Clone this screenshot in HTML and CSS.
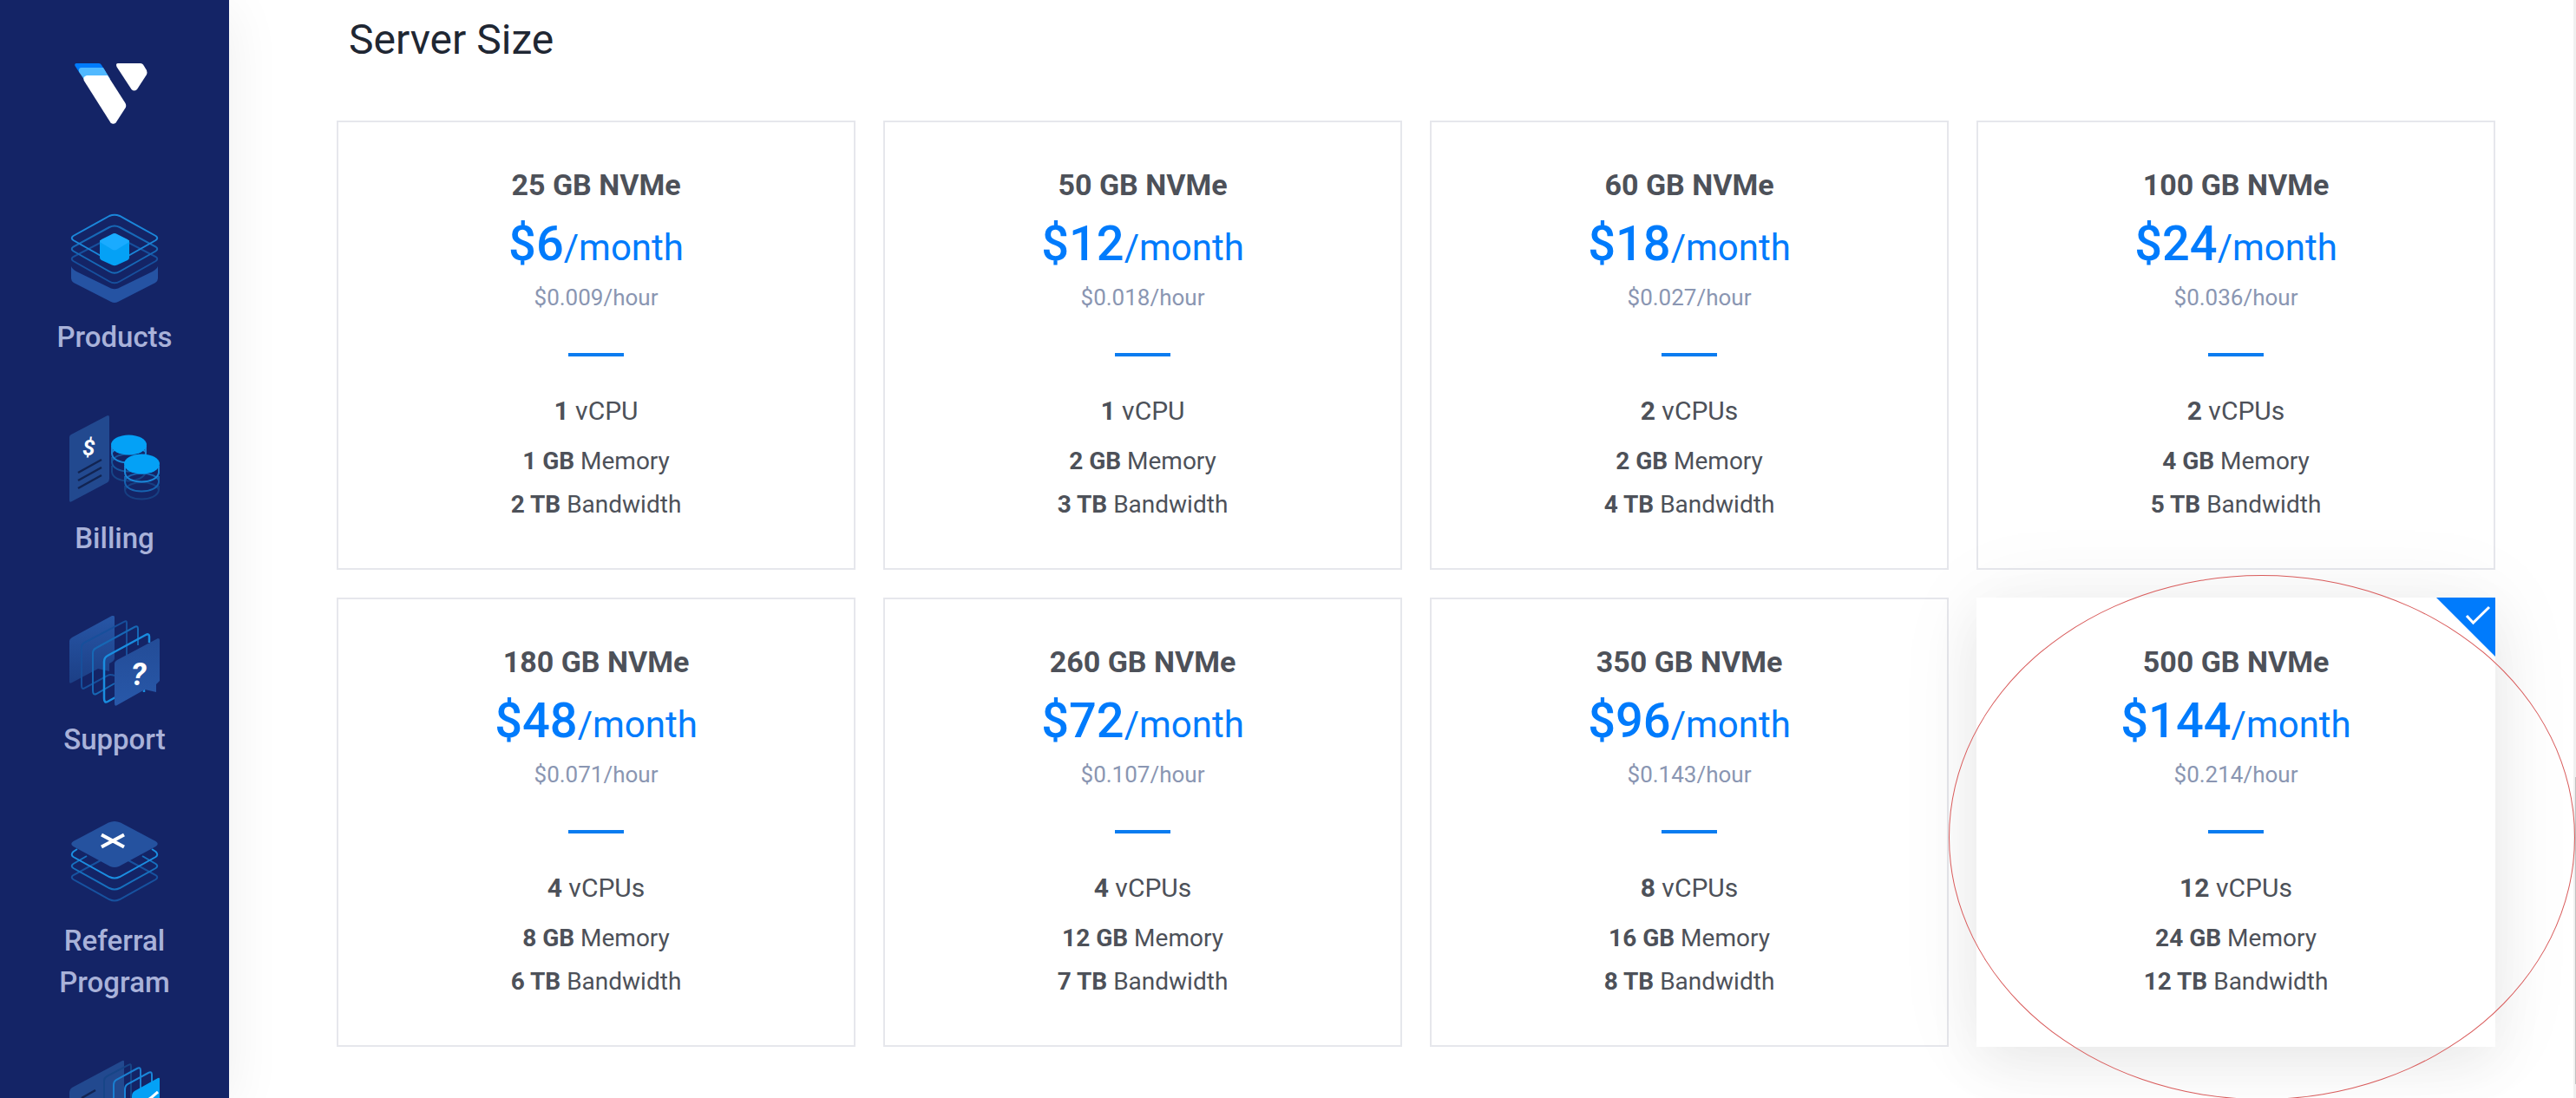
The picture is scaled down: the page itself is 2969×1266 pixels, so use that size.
FILE: index.html
```html
<!DOCTYPE html>
<html lang="en">
<head>
<meta charset="utf-8">
<title>Server Size</title>
<link rel="stylesheet" href="styles.css">
</head>
<body>
<div class="app">
  <nav class="sidebar" aria-label="Main">
    <a class="logo" href="#" aria-label="Home">
      <svg width="84" height="70" viewBox="0 0 84 70">
        <path fill="#007bfc" d="M2 0H28Q30 0 31 2L36 10H5L.500 3Q-.500 0 2 0Z"/>
        <path fill="#51b9ff" d="M8 5H33L41 18H10.500L5 10Q4 5 8 5Z"/>
        <path fill="#fff" d="M14 14H38L58.500 46Q60 49 58.500 51.500L47.500 68.500Q44.500 71 41.500 68.500L10.800 20Q9 15.500 14 14Z"/>
        <path fill="#fff" d="M50 0H76Q78 0 79 1.500L83 8Q84 11 83 13L72 30Q68.500 33 65.500 30L48.500 4Q47 0 50 0Z"/>
      </svg>
    </a>
    <ul class="nav-list">
      <li><a class="nav-item" href="#">
        <svg class="nav-icon" viewBox="0 0 104 104">
          <g fill="none" stroke-width="2">
            <path stroke="#17509d" d="M46 28.500 4.500 50Q1 52.500 4.500 55L46 78.500Q52 82 58 78.500L99.500 55Q103 52.500 99.500 50L58 28.500Q52 25.500 46 28.500Z"/>
            <path stroke="#1769b7" d="M46 16 4.500 38.500Q1 41 4.500 43.500L46 67Q52 70.500 58 67L99.500 43.500Q103 41 99.500 38.500L58 16Q52 13 46 16Z"/>
            <path stroke="#1b87da" d="M46 3 4.500 26Q1 28.500 4.500 31L46 54.500Q52 58 58 54.500L99.500 31Q103 28.500 99.500 26L58 3Q52 .5 46 3Z"/>
          </g>
          <path fill="#2553a3" d="M2 61Q3 64 8 67L48 86.500Q52 88 56 86.500L96 67Q101 64 102 61V75Q102 78 99 80L56 102Q52 104 48 102L5 80Q2 78 2 75Z"/>
          <path fill="#04a1f6" d="M35 31H69V51Q69 53 67 54L55 59.500Q52 61 49 59.500L37 54Q35 53 35 51Z"/>
          <path fill="#1aabff" d="M49 24Q52 22 55 24L67 30Q69 31 69 33L55 41.500Q52 43.500 49 41.500L35 33Q35 31 37 30Z"/>
        </svg>
        <span>Products</span></a></li>
      <li><a class="nav-item" href="#">
        <svg class="nav-icon" viewBox="0 0 104 104">
          <path fill="#22498f" d="M0 26Q0 24 2 23L43 1.500Q46 0 46 3V74Q46 77 43.500 78.500L3 100Q0 102 0 99Z"/>
          <path stroke="#122452" stroke-width="2.500" d="M10 67 37 52M10 76 37 61M10 85 37 70"/>
          <text class="glyph" x="15" y="47">$</text>
          <g fill="none" stroke-width="2">
            <path stroke="#174588" d="M49 59V66C50 80 85 80 88 66V60"/>
            <path stroke="#17559d" d="M49 49V55C50 69 85 69 88 55V49M50 53C53 43 82 43 87 53"/>
            <path stroke="#1a86d8" d="M49 36V45C50 59 85 59 88 45V36M50 43C55 33 82 33 87 43"/>
          </g>
          <ellipse cx="68.500" cy="35" rx="20.500" ry="11.500" fill="#04a1f6"/>
          <g fill="none" stroke-width="2">
            <path stroke="#173f82" d="M64 82V87C65 101 101 101 103 87V82M64 87C68 75 99 75 103 87"/>
            <path stroke="#1763b0" d="M64 71V78C65 92 101 92 103 78V71M64 76C68 65 99 65 103 76"/>
            <path stroke="#1a86d8" d="M64 59V67C65 81 101 81 103 67V59"/>
          </g>
          <ellipse cx="83.500" cy="57" rx="20.500" ry="11.500" fill="#04a1f6"/>
        </svg>
        <span>Billing</span></a></li>
      <li><a class="nav-item" href="#">
        <svg class="nav-icon" viewBox="0 0 104 104">
          <defs>
            <linearGradient id="panel" x2="0" y2="1"><stop stop-color="#2756a6"/><stop offset="1" stop-color="#1c3f86"/></linearGradient>
            <linearGradient id="front" x2="0" y2="1"><stop stop-color="#234c97"/><stop offset="1" stop-color="#2858a9"/></linearGradient>
          </defs>
          <path fill="url(#panel)" d="M0 29Q0 27 3 25L49 0Q52-1 52 2V49Q52 52 46 55V64L33 61 3 77Q0 79 0 76Z"/>
          <g fill="none" stroke-width="2">
            <path stroke="#174f9b" d="M66 46V8Q66 5 63 7L17 31Q14 33 14 36V80Q14 86 18 83L44 69Q47 67 52 69"/>
            <path stroke="#1768b5" d="M79 34V15Q79 11 75 13L31 37Q27 39 27 43V86Q27 92 31 90L52 78"/>
            <path stroke="#1a8ddf" stroke-width="2.500" d="M92 31V24Q92 20 88 22L44 46Q40 48 40 53V95Q40 101 44 99L53 94M86 83V88"/>
          </g>
          <path fill="url(#front)" d="M52 55Q52 53 55 51L102 26Q104 26 104 28V75L100 79V88L87 85 55 103Q52 105 52 101Z"/>
          <text class="glyph glyph-large" x="71" y="80">?</text>
        </svg>
        <span>Support</span></a></li>
      <li><a class="nav-item" href="#">
        <svg class="nav-icon" viewBox="0 0 104 104">
          <g fill="none" stroke-width="2">
            <path stroke="#17529f" d="M36 50 4.500 67Q1 69.500 4.500 72L46 95Q52 98 58 95L99.500 72Q103 69.500 99.500 67L68 50"/>
            <path stroke="#1770be" d="M20 45 4.500 54Q1 56.500 4.500 59L46 82Q52 85 58 82L99.500 59Q103 56.500 99.500 54L84 45"/>
            <path stroke="#1b8ee1" d="M9 37 4.500 40Q1 43.500 4.500 46L46 69Q52 72 58 69L99.500 46Q103 43.500 99.500 40L95 37"/>
          </g>
          <path fill="#25529f" d="M45 6.500Q52 3.500 59 6.500L99.500 28Q104 31 99.500 34L57 57Q52 59 47 57L4.500 34Q0 31 4.500 28Z"/>
          <path stroke="#fff" stroke-width="4" d="M37 20.500 63 34.500M63 20.500 37 34.500"/>
        </svg>
        <span>Referral Program</span></a></li>
      <li><a class="nav-item" href="#" aria-label="Documents">
        <svg class="nav-icon" viewBox="0 0 104 104">
          <path fill="#22498f" d="M0 37Q0 34 3 32L61 1Q63 0 63 2V80L0 104Z"/>
          <path stroke="#122452" stroke-width="2.500" d="M14 44 30 35"/>
          <g fill="none" stroke-width="2">
            <path stroke="#174587" d="M71 60V7Q71 4 68 6L43 19Q40 21 40 24V90"/>
            <path stroke="#1a7fd0" d="M82 60V12Q82 8 78 10L54 23Q51 25 51 29V90"/>
            <path stroke="#1a86d8" d="M95 60V17Q95 13 91 15L67 28Q64 30 64 34V90"/>
          </g>
          <path fill="#04a1f6" d="M72 42Q72 38 75 36L102 21Q104 20 104 22V80L72 96Z"/>
          <path fill="none" stroke="#fff" stroke-width="3" d="M82 52 95 43 102 37"/>
        </svg></a></li>
    </ul>
  </nav>

  <main class="content">
    <h1 class="title">Server Size</h1>
    <form class="plans">
      <label class="plan"><input class="plan-radio" type="radio" name="plan"><span class="plan-name">25 GB NVMe</span><span class="price"><span class="amount">$6</span>/month</span><span class="hourly">$0.009/hour</span><span class="rule"></span><span class="cpu"><b>1</b> vCPU</span><span class="spec"><b>1 GB</b> Memory</span><span class="spec"><b>2 TB</b> Bandwidth</span></label>
      <label class="plan"><input class="plan-radio" type="radio" name="plan"><span class="plan-name">50 GB NVMe</span><span class="price"><span class="amount">$12</span>/month</span><span class="hourly">$0.018/hour</span><span class="rule"></span><span class="cpu"><b>1</b> vCPU</span><span class="spec"><b>2 GB</b> Memory</span><span class="spec"><b>3 TB</b> Bandwidth</span></label>
      <label class="plan"><input class="plan-radio" type="radio" name="plan"><span class="plan-name">60 GB NVMe</span><span class="price"><span class="amount">$18</span>/month</span><span class="hourly">$0.027/hour</span><span class="rule"></span><span class="cpu"><b>2</b> vCPUs</span><span class="spec"><b>2 GB</b> Memory</span><span class="spec"><b>4 TB</b> Bandwidth</span></label>
      <label class="plan"><input class="plan-radio" type="radio" name="plan"><span class="plan-name">100 GB NVMe</span><span class="price"><span class="amount">$24</span>/month</span><span class="hourly">$0.036/hour</span><span class="rule"></span><span class="cpu"><b>2</b> vCPUs</span><span class="spec"><b>4 GB</b> Memory</span><span class="spec"><b>5 TB</b> Bandwidth</span></label>
      <label class="plan"><input class="plan-radio" type="radio" name="plan"><span class="plan-name">180 GB NVMe</span><span class="price"><span class="amount">$48</span>/month</span><span class="hourly">$0.071/hour</span><span class="rule"></span><span class="cpu"><b>4</b> vCPUs</span><span class="spec"><b>8 GB</b> Memory</span><span class="spec"><b>6 TB</b> Bandwidth</span></label>
      <label class="plan"><input class="plan-radio" type="radio" name="plan"><span class="plan-name">260 GB NVMe</span><span class="price"><span class="amount">$72</span>/month</span><span class="hourly">$0.107/hour</span><span class="rule"></span><span class="cpu"><b>4</b> vCPUs</span><span class="spec"><b>12 GB</b> Memory</span><span class="spec"><b>7 TB</b> Bandwidth</span></label>
      <label class="plan"><input class="plan-radio" type="radio" name="plan"><span class="plan-name">350 GB NVMe</span><span class="price"><span class="amount">$96</span>/month</span><span class="hourly">$0.143/hour</span><span class="rule"></span><span class="cpu"><b>8</b> vCPUs</span><span class="spec"><b>16 GB</b> Memory</span><span class="spec"><b>8 TB</b> Bandwidth</span></label>
      <label class="plan plan-selected"><input class="plan-radio" type="radio" name="plan" checked><span class="plan-name">500 GB NVMe</span><span class="price"><span class="amount">$144</span>/month</span><span class="hourly">$0.214/hour</span><span class="rule"></span><span class="cpu"><b>12</b> vCPUs</span><span class="spec"><b>24 GB</b> Memory</span><span class="spec"><b>12 TB</b> Bandwidth</span>
        <svg class="corner" viewBox="0 0 68 68" aria-hidden="true"><path fill="#007bfc" d="M0 0H68V68Z"/><path fill="none" stroke="#fff" stroke-width="3" d="M35 21 42.500 29 61 11"/></svg>
        <span class="highlight"></span>
      </label>
    </form>
  </main>
  <div class="scroll-track"><div class="scroll-thumb"></div></div>
</div>
</body>
</html>
```
FILE: styles.css
```css
* { box-sizing: border-box; }

body {
  margin: 0;
  font-family: Roboto, "Liberation Sans", sans-serif;
  color: #4d5159;
  background: #fff;
}

.app {
  display: flex;
  height: 100vh;
  overflow: hidden;
}

.sidebar {
  flex: none;
  width: 264px;
  padding-top: 73px;
  overflow: hidden;
  background: #142466;
  box-shadow: 0 10px 60px rgba(0, 0, 0, .07);
}

.logo {
  display: block;
  margin-left: 86px;
  height: 173px;
}

.nav-list {
  display: flex;
  flex-direction: column;
  gap: 65px;
  margin: 0;
  padding: 0;
  list-style: none;
}

.nav-item {
  display: flex;
  flex-direction: column;
  align-items: center;
  gap: 15px;
  padding: 0 48px;
  font-size: 33px;
  font-weight: 500;
  line-height: 48px;
  text-align: center;
  text-decoration: none;
  color: #a9b2d9;
}

.nav-icon {
  width: 104px;
  height: 104px;
}

.glyph {
  font-family: Roboto, sans-serif;
  font-size: 26px;
  font-style: italic;
  font-weight: 700;
  fill: #fff;
}

.glyph-large { font-size: 36px; }

.content {
  flex: 1;
  min-width: 0;
  padding: 16px 90px 0 124px;
}

.title {
  margin: 0 0 63px;
  padding-left: 14px;
  font-size: 48px;
  font-weight: 400;
  line-height: 60px;
  color: #1f2733;
}

.plans {
  display: grid;
  grid-template-columns: repeat(4, 1fr);
  gap: 32px;
}

.plan {
  position: relative;
  display: flex;
  flex-direction: column;
  align-items: center;
  padding: 50px 0 48px;
  border: 2px solid #e6e7ec;
  cursor: pointer;
}

.plan-selected {
  border-color: #fff;
  background: #fff;
  box-shadow: 0 20px 60px rgba(0, 0, 0, .06), 0 0 100px rgba(0, 0, 0, .06);
}

.plan-radio {
  position: absolute;
  inset: 0;
  margin: 0;
  opacity: 0;
}

.plan-name {
  font-size: 34px;
  font-weight: 700;
  line-height: 44px;
}

.price {
  margin-top: 11px;
  font-size: 42px;
  line-height: 70px;
  color: #007bfc;
}

.amount {
  font-size: 56px;
  font-weight: 500;
}

.hourly {
  font-size: 26px;
  line-height: 44px;
  color: #8a96b2;
}

.rule {
  width: 64px;
  height: 4px;
  margin: 42px 0 38px;
  background: #0a7cf0;
}

.cpu {
  margin-bottom: 8px;
  font-size: 30px;
  line-height: 50px;
}

.spec {
  font-size: 28px;
  line-height: 50px;
}

.corner {
  position: absolute;
  top: -2px;
  right: -2px;
  width: 68px;
  height: 68px;
}

.highlight {
  position: absolute;
  top: -28px;
  left: -34px;
  right: -94px;
  bottom: -63px;
  border: 1px solid #d95c5c;
  border-radius: 50%;
  pointer-events: none;
}

.scroll-track {
  flex: none;
  width: 3px;
  padding: 896px 0 0 2px;
  background: #f0f0f0;
}

.scroll-thumb {
  height: 354px;
  background: #c1c1c1;
}
```
